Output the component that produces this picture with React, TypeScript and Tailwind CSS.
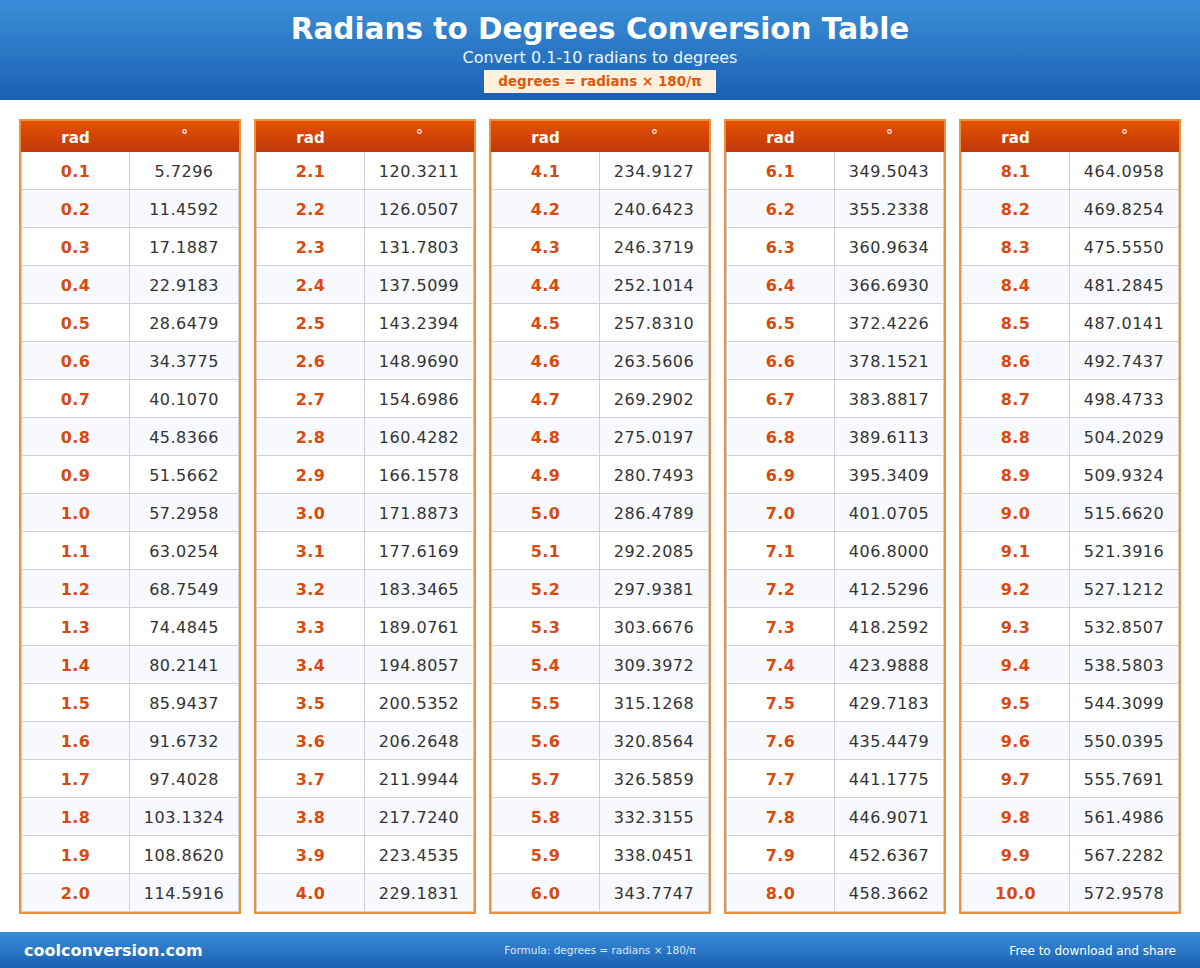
import React from "react";

const font = { fontFamily: '"DejaVu Sans", Verdana, sans-serif' };

function Table({ start }: { start: number }) {
  const rows = Array.from({ length: 20 }, (_, i) => {
    const r = (start + i + 1) / 10;
    return { r: r.toFixed(1), d: ((r * 180) / Math.PI).toFixed(4) };
  });
  return (
    <div className="border-2 border-[#e8913f] bg-white">
      <div className="grid grid-cols-2 h-[31px] bg-gradient-to-b from-[#e65100] to-[#c0390c] text-white">
        <div className="flex items-center justify-center text-[15px] font-bold pt-[3px]">rad</div>
        <div className="flex items-center justify-center text-[14px] pb-[3px]">°</div>
      </div>
      {rows.map((row, i) => (
        <div
          key={i}
          className={`grid grid-cols-2 h-[38px] ${i % 2 === 1 ? "bg-[#f7f9fc]" : "bg-white"}`}
        >
          <div className="flex items-center justify-center pt-[3px] border-l border-r border-b border-[#d0d0d0] text-[16px] font-bold text-[#d84a0f] tracking-[0.4px]">
            {row.r}
          </div>
          <div className="flex items-center justify-center pt-[3px] border-r border-b border-[#d0d0d0] text-[16px] text-[#333333] tracking-[0.5px]">
            {row.d}
          </div>
        </div>
      ))}
    </div>
  );
}

export default function App() {
  return (
    <div className="w-[1200px] h-[968px] bg-white flex flex-col" style={font}>
      <div className="h-[100px] bg-gradient-to-b from-[#3b8fd9] to-[#1a60b0] flex flex-col items-center text-white">
        <div className="mt-[12px] text-[29.5px] font-bold leading-[35px]">Radians to Degrees Conversion Table</div>
        <div className="mt-[1px] text-[16px] leading-[19px] text-[#eef5ff]">Convert 0.1-10 radians to degrees</div>
        <div className="mt-[3px] w-[232px] h-[23px] bg-[#fff1dd] flex items-center justify-center text-[13.5px] font-bold text-[#e0580c]">
          degrees = radians × 180/π
        </div>
      </div>
      <div className="grid grid-cols-5 gap-[13px] px-[19px] pt-[19px]">
        {[0, 20, 40, 60, 80].map((s) => (
          <Table key={s} start={s} />
        ))}
      </div>
      <div className="mt-[18px] h-[36px] bg-gradient-to-b from-[#3a8edb] to-[#1a5fb0] flex items-center justify-between px-[24px] pt-[2px] text-white">
        <div className="text-[16px] font-bold w-[300px]">coolconversion.com</div>
        <div className="text-[10.5px] text-[#dbe8f7]">Formula: degrees = radians × 180/π</div>
        <div className="text-[12px] w-[300px] text-right">Free to download and share</div>
      </div>
    </div>
  );
}
